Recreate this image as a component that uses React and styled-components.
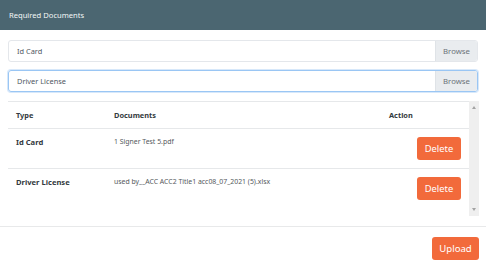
import React from 'react';
import styled, { createGlobalStyle } from 'styled-components';

const Global = createGlobalStyle`
  html, body { margin: 0; padding: 0; background: #ffffff; }
  body {
    font-family: "Noto Sans", "Open Sans", sans-serif;
    width: 486px;
    height: 263px;
    overflow: hidden;
  }
`;

const Header = styled.div`
  height: 30px;
  background: #4b6671;
  color: #f2f6f7;
  font-size: 7.6px;
  display: flex;
  align-items: center;
  padding-left: 9px;
`;

const Body = styled.div`
  padding: 10px 8px 0 8px;
  display: flex;
  flex-direction: column;
`;

const FileRow = styled.div`
  display: flex;
  height: 22px;
  box-sizing: border-box;
  border: 1px solid ${p => (p.$focused ? '#9ac6f4' : '#e4e7eb')};
  box-shadow: ${p => (p.$focused ? '0 0 0 1px rgba(140,190,240,0.35)' : 'none')};
  border-radius: 3px;
  margin-bottom: 8px;
  overflow: hidden;
`;

const FileName = styled.div`
  flex: 1;
  display: flex;
  align-items: center;
  padding-left: 8px;
  font-size: 7.4px;
  color: #50585f;
`;

const Browse = styled.div`
  width: 41px;
  display: flex;
  align-items: center;
  justify-content: center;
  background: #e9ecef;
  border-left: 1px solid #dfe3e7;
  font-size: 7.8px;
  color: #6b737a;
`;

const TableArea = styled.div`
  display: flex;
  height: 115px;
  margin-top: 1px;
  margin-right: -1px;
`;

const TableScroll = styled.div`
  flex: 1;
  overflow: hidden;
`;

const Table = styled.table`
  width: 100%;
  border-collapse: collapse;
  table-layout: fixed;
`;

const Th = styled.th`
  text-align: left;
  font-weight: 700;
  font-size: 7.4px;
  color: #333a40;
  padding: 8px 8px;
  line-height: 10px;
  border-top: 1px solid #e6e8ea;
  border-bottom: 1px solid #e6e8ea;
  width: ${p => p.$w || 'auto'};
`;

const Td = styled.td`
  padding: 8px;
  line-height: 10px;
  vertical-align: top;
  font-size: ${p => (p.$bold ? '7.6px' : '6.9px')};
  color: ${p => (p.$bold ? '#333a40' : '#55595d')};
  font-weight: ${p => (p.$bold ? 700 : 400)};
  border-bottom: ${p => (p.$last ? 'none' : '1px solid #e6e8ea')};
  white-space: nowrap;
`;

const Button = styled.button`
  display: block;
  margin-left: auto;
  height: 23px;
  width: ${p => p.$w}px;
  padding: 0;
  border: none;
  border-radius: 3px;
  background: #f26a3b;
  color: #ffffff;
  font-family: inherit;
  font-size: ${p => p.$fs || 9.4}px;
  cursor: pointer;
`;

const Scrollbar = styled.div`
  width: 10px;
  background: #efefef;
  display: flex;
  flex-direction: column;
  justify-content: space-between;
  align-items: center;
  padding: 5px 0;
  box-sizing: border-box;
`;

const Arrow = styled.div`
  width: 0;
  height: 0;
  border-left: 2.5px solid transparent;
  border-right: 2.5px solid transparent;
  ${p => (p.$down ? 'border-top: 3px solid #a3a3a3;' : 'border-bottom: 3px solid #a3a3a3;')}
`;

const Footer = styled.div`
  margin-top: 10px;
  border-top: 1px solid #e8e9ea;
  padding: 10px 7px 0 8px;
  display: flex;
  justify-content: flex-end;
`;

const docs = [
  { type: 'Id Card', file: '1 Signer Test 5.pdf' },
  { type: 'Driver License', file: 'used by__ACC ACC2 Title1 acc08_07_2021 (5).xlsx' },
];

export default function App() {
  return (
    <>
      <Global />
      <Header>Required Documents</Header>
      <Body>
        <FileRow>
          <FileName>Id Card</FileName>
          <Browse>Browse</Browse>
        </FileRow>
        <FileRow $focused>
          <FileName>Driver License</FileName>
          <Browse>Browse</Browse>
        </FileRow>
        <TableArea>
          <TableScroll>
            <Table>
              <thead>
                <tr>
                  <Th $w="82px">Type</Th>
                  <Th $w="259px">Documents</Th>
                  <Th>Action</Th>
                </tr>
              </thead>
              <tbody>
                {docs.map((d, i) => (
                  <tr key={d.type}>
                    <Td $bold $last={i === docs.length - 1}>{d.type}</Td>
                    <Td $last={i === docs.length - 1}>{d.file}</Td>
                    <Td $last={i === docs.length - 1}>
                      <Button $w={44}>Delete</Button>
                    </Td>
                  </tr>
                ))}
              </tbody>
            </Table>
          </TableScroll>
          <Scrollbar>
            <Arrow />
            <Arrow $down />
          </Scrollbar>
        </TableArea>
      </Body>
      <Footer>
        <Button $w={47} $fs={9.6}>Upload</Button>
      </Footer>
    </>
  );
}
